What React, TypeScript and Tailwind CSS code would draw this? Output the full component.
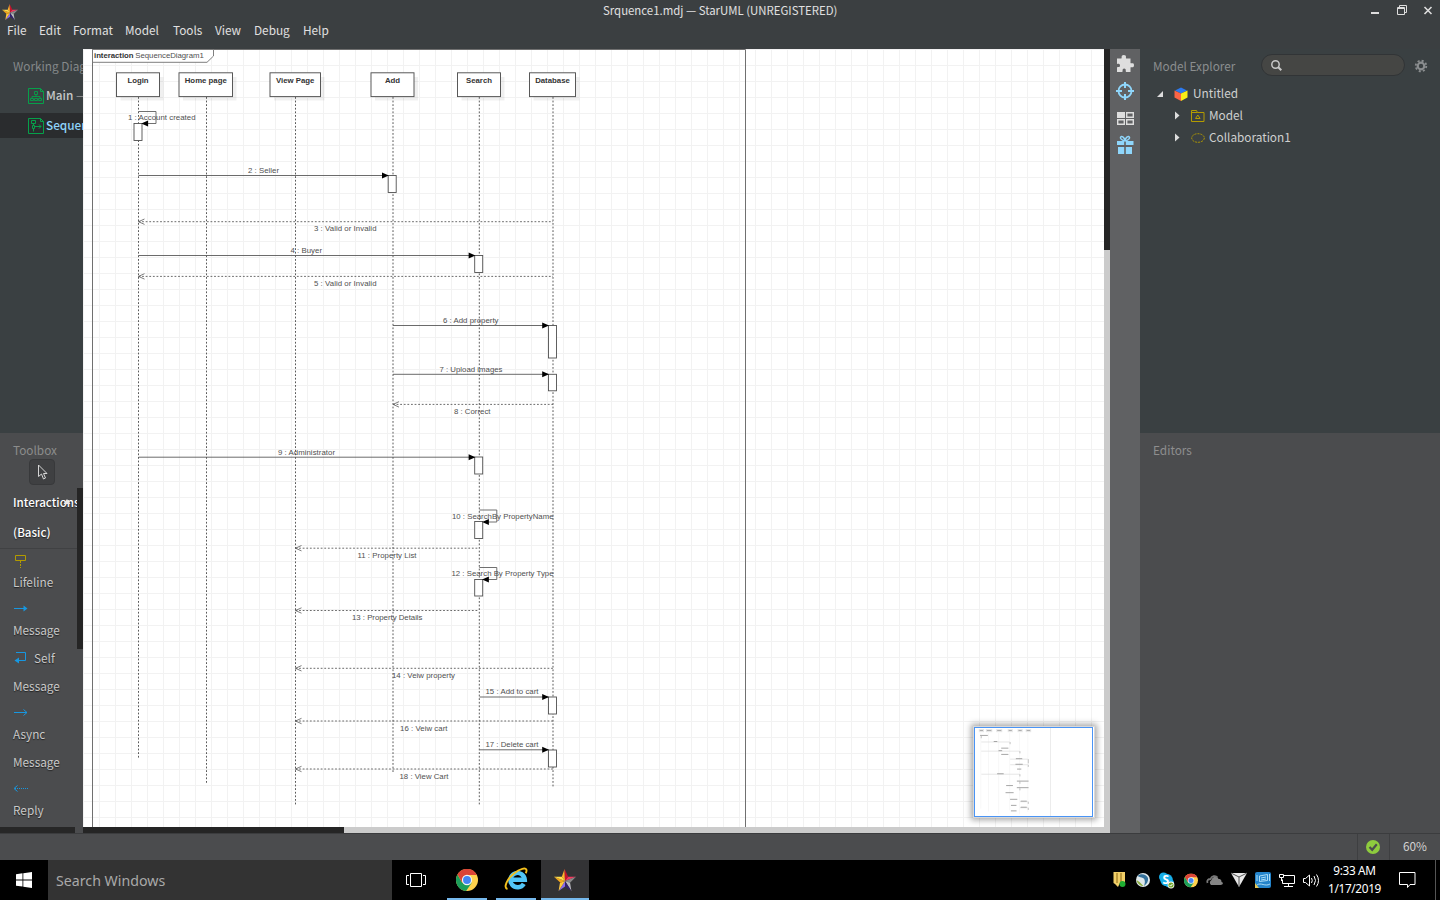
import React from "react";

const UI = "font-['Noto_Sans_CJK_SC',sans-serif]";
const INK = "#5a5a5a";

const heads: [string, number, number, number, number][] = [
  ["Login", 116.5, 43, 138.5, 758],
  ["Home page", 179, 53.5, 206.5, 783],
  ["View Page", 270, 50.5, 295.5, 806],
  ["Add", 371, 43, 393, 772],
  ["Search", 457.5, 43, 479.3, 806],
  ["Database", 529.5, 46, 553, 787],
];

const bars: [number, number, number][] = [
  [138, 123.5, 17], [392.2, 175.5, 17], [478.7, 255.5, 17], [552.5, 325.5, 32.5], [552.5, 374.3, 16.5],
  [478.7, 457, 17], [478.7, 521.5, 17], [478.7, 579.5, 16.5], [552.5, 697, 17], [552.5, 750, 17],
];

const calls: [number, number, number][] = [
  [138.5, 388, 175.5], [138.5, 474.6, 255.5], [393, 548.2, 325.5], [393, 548.2, 374.3],
  [138.5, 474.6, 457.2], [479.5, 548.2, 697], [479.5, 548.2, 749.8],
];

const replies: [number, number, number][] = [
  [138.5, 553, 221.7], [138.5, 553, 276.4], [393, 553, 404.4], [295.5, 479, 548.2],
  [295.5, 479, 610.5], [295.5, 553, 668.3], [295.5, 553, 721], [295.5, 553, 769],
];

const loops: [number, number][] = [[138.5, 111.5], [479.3, 510], [479.3, 567.5]];

const labels: [string, number, number, number][] = [
  ["1 : Account created", 128, 120.2, 67.5],
  ["2 : Seller", 248, 173.3, 31],
  ["3 : Valid or Invalid", 314, 231.3, 62.5],
  ["4 : Buyer", 290.5, 253.3, 31.5],
  ["5 : Valid or Invalid", 314, 286, 62.5],
  ["6 : Add property", 443, 323.3, 55.5],
  ["7 : Upload images", 439.5, 372.2, 63],
  ["8 : Correct", 454, 414.2, 36.5],
  ["9 : Administrator", 278, 455, 57],
  ["10 : SearchBy PropertyName", 452, 519.3, 101.5],
  ["11 : Property List", 357.5, 558.2, 59],
  ["12 : Search By Property Type", 451.5, 576.4, 102],
  ["13 : Property Details", 352, 620.3, 70.5],
  ["14 : Veiw property", 392, 678.2, 63],
  ["15 : Add to cart", 485.5, 694.2, 53],
  ["16 : Veiw cart", 400, 731.2, 47.5],
  ["17 : Delete cart", 485.5, 747.2, 53],
  ["18 : View Cart", 399.5, 779.2, 49],
];

function Diagram() {
  return (
    <svg width="1021" height="778" viewBox="83 49 1021 778" className="block" fontFamily="'Liberation Sans', sans-serif">
      <defs>
        <pattern id="grid" x="83" y="49" width="16" height="16" patternUnits="userSpaceOnUse">
          <path d="M0 .5H16M.5 0V16" stroke="#f2f2f2" />
        </pattern>
      </defs>
      <rect x="83" y="49" width="1021" height="778" fill="#fff" />
      <rect x="83" y="49" width="1021" height="778" fill="url(#grid)" />
      <path d="M745.5 827V49.5H92.5V827" fill="none" stroke="#707070" />
      <path d="M92.500 49.500H213.500V56L207 62.300H92.500Z" fill="#fff" stroke="#707070" strokeWidth=".9" />
      <text x="94" y="58.2" fontSize="7.8" fontWeight="bold" fill="#333" textLength="39.5">interaction</text>
      <text x="135.3" y="58.2" fontSize="7.8" fill="#505050" textLength="68.5">SequenceDiagram1</text>
      {heads.map(([name, x, w, cx, end]) => (
        <g key={name}>
          <rect x={x + 4} y="77" width={w} height="23.5" fill="#000" opacity=".06" />
          <rect x={x} y="72.8" width={w} height="23.8" fill="#fff" stroke="#505050" strokeWidth=".95" />
          <text x={x + w / 2} y="82.9" fontSize="7.8" fontWeight="bold" fill="#333" textAnchor="middle">{name}</text>
          <path d={`M${cx} 97V${end}`} stroke={INK} strokeDasharray="1.8 1.8" />
        </g>
      ))}
      {bars.map(([cx, y, h]) => (
        <rect key={`${cx}-${y}`} x={cx - 4} y={y} width="8" height={h} fill="#fff" stroke="#505050" strokeWidth=".9" />
      ))}
      {calls.map(([a, b, y]) => (
        <g key={y}>
          <path d={`M${a} ${y}H${b}`} stroke={INK} strokeWidth=".9" />
          <path d={`M${b + 0.8} ${y}l-6.8-3v6z`} fill="#000" />
        </g>
      ))}
      {replies.map(([a, b, y]) => (
        <g key={y} fill="none" stroke={INK} strokeWidth=".9">
          <path d={`M${a} ${y}H${b}`} strokeDasharray="1.8 1.8" />
          <path d={`M${a + 6} ${y - 2.7}L${a} ${y}L${a + 6} ${y + 2.7}`} strokeWidth=".8" />
        </g>
      ))}
      {loops.map(([x, y]) => (
        <g key={y}>
          <path d={`M${x} ${y}h17.5v12h-11`} fill="none" stroke="#606060" strokeWidth=".9" />
          <path d={`M${x + 2.8} ${y + 12}l6.8-3v6z`} fill="#000" />
        </g>
      ))}
      {labels.map(([t, x, y, w]) => (
        <text key={t} x={x} y={y} fontSize="7.8" fill="#505050" textLength={w}>{t}</text>
      ))}
    </svg>
  );
}

function MiniMap() {
  const sx = (x: number) => 975 + (x - 83) * 0.1135;
  const sy = (y: number) => 727.5 + (y - 49) * 0.1145;
  return (
    <div className="absolute left-[890px] top-[677px] h-[92px] w-[122px] border border-[#d8d8d8] bg-white shadow-[0_0_6px_2px_rgba(0,0,0,0.35)]">
      <svg width="120" height="90" viewBox="974 727 120 90" className="block">
        <rect x="974.500" y="727.500" width="118" height="89" fill="#fff" stroke="#4a94f5" />
        <path d="M1050.500 728V816" stroke="#ececec" />
        {heads.map(([n, x, w, cx, e]) => (
          <g key={n}>
            <rect x={sx(x)} y="729" width={w * 0.12} height="3.2" fill="#e8e8e8" />
            <path d={`M${sx(x) + 1} 730.500h${w * 0.12 - 2}`} stroke="#a0a0a0" strokeWidth=".8" />
            <path d={`M${sx(cx) - 0.5} 733V${sy(e)}`} stroke="#f2f2f2" strokeWidth=".6" />
          </g>
        ))}
        {calls.map(([a, b, y]) => <path key={y} d={`M${sx(a)} ${sy(y)}H${sx(b)}`} stroke="#dcdcdc" strokeWidth=".7" />)}
        {bars.map(([x, y, h]) => <path key={`${x}${y}`} d={`M${sx(x)} ${sy(y)}v${h * 0.13}`} stroke="#aaa" strokeWidth=".7" />)}
        {labels.map(([t, x, y, w]) => <path key={t} d={`M${sx(x)} ${sy(y - 2)}h${w * 0.115}`} stroke="#909090" strokeWidth=".8" />)}
      </svg>
    </div>
  );
}

function Star({ size }: { size: number }) {
  return (
    <svg width={size} height={size} viewBox="0 0 24 24" className="block shrink-0">
      <path d="M11.500 0 8.500 8.500 12 13Z" fill="#ffb52c" />
      <path d="M11.500 0 15.500 8.500 12 13Z" fill="#c4132d" />
      <path d="M15.500 8.500 24 8.500 12 13Z" fill="#f23a60" />
      <path d="M24 8.500 17.500 15 12 13Z" fill="#898989" />
      <path d="M17.500 15 19 24 12 13Z" fill="#b8b8bd" />
      <path d="M19 24 12 19 12 13Z" fill="#34206e" />
      <path d="M12 19 5 24 12 13Z" fill="#8a6be8" />
      <path d="M5 24 6.500 15 12 13Z" fill="#ffc93c" />
      <path d="M7 15 0 8.500 12 13Z" fill="#f4a51c" />
      <path d="M0 8.500 8.500 8.500 12 13Z" fill="#ffe04b" />
    </svg>
  );
}

function Chrome({ size }: { size: number }) {
  return (
    <svg width={size} height={size} viewBox="0 0 24 24" className="block">
      <circle cx="12" cy="12" r="12" fill="#ffd24d" />
      <path d="M1.600 6A12 12 0 0 0 11 24L17.200 15 12 12 6.800 15Z" fill="#1b9e5a" />
      <path d="M1.600 6A12 12 0 0 1 22.800 6.600H12L6.800 15Z" fill="#db4437" />
      <circle cx="12" cy="12" r="5.600" fill="#f4f4f4" />
      <circle cx="12" cy="12" r="4.300" fill="#4285f4" />
    </svg>
  );
}

const menus = [["File", "w-8"], ["Edit", "w-[34px]"], ["Format", "w-[52px]"], ["Model", "w-12"], ["Tools", "w-[42px]"], ["View", "w-[39px]"], ["Debug", "w-[49px]"], ["Help", "w-10"]];

function TitleBar() {
  return (
    <header className="h-[49px] shrink-0 bg-[#3b3f41] text-[#e0e0e0]">
      <div className="flex h-[21px] items-center">
        <div className="w-[83px] pl-[2px] pt-[3px]"><Star size={16} /></div>
        <div className="flex-1 pl-[520px] text-[11.4px] leading-[21px] whitespace-nowrap">Srquence1.mdj — StarUML (UNREGISTERED)</div>
        <svg width="80" height="21" viewBox="1360 0 80 21" fill="none" stroke="#ddd">
          <path d="M1371 13h8" strokeWidth="2" />
          <path d="M1397.500 7.500h7v7h-7zM1399.500 7V5.500h7v7H1405M1397 8.500h8" />
          <path d="M1424.500 7l7 7M1431.500 7l-7 7" strokeWidth="1.600" />
        </svg>
      </div>
      <nav className="flex h-[18px] items-center gap-0 pl-[7px] text-[11.8px] leading-[18px]">
        {menus.map(([m, w]) => <span key={m} className={w + " shrink-0"}>{m}</span>)}
      </nav>
    </header>
  );
}

function DiagramIcon({ seq }: { seq?: boolean }) {
  return (
    <svg width="16" height="16" viewBox="0 0 16 16" fill="none" stroke="#06a04a" className="shrink-0">
      <path d="M.500 .500H12.500L15.500 3.500V15.500H.500ZM12.500 .500v3h3" />
      {seq ? (
        <path d="M3.500 2.500h4v3h-4zM5.500 5.500v2M4.500 7.500h2v3h-2zM5.500 10.500v3M7 8.500h6M11 6.500l2 2-2 2" />
      ) : (
        <path d="M6.500 3.500h3v3h-3zM8 6.500v2.500M4 10.500V8.500h8v2M2.500 10.500h3v2h-3zM6.500 10.500h3v2h-3zM10.500 10.500h3v2h-3z" strokeWidth=".9" />
      )}
    </svg>
  );
}

function ToolIcon({ kind }: { kind: string }) {
  if (kind === "life")
    return <svg width="16" height="16" viewBox="0 0 16 16" fill="none" stroke="#b39b00"><path d="M2.500 2.500h10v5h-10z" /><path d="M7.500 8v7" strokeDasharray="2 1" /></svg>;
  return (
    <svg width="16" height="16" viewBox="0 0 16 16" fill="none" stroke="#1797e0">
      {kind === "msg" && <><path d="M1 8.500h10" /><path d="M10.500 5.500v6l4-3z" fill="#1797e0" stroke="none" /></>}
      {kind === "self" && <><path d="M3 2.500h9.500v8H5" /><path d="M6 7.500v6l-4.500-3z" fill="#1797e0" stroke="none" /></>}
      {kind === "async" && <path d="M1 8.500h13M10.500 5.500l3.500 3-3.500 3" />}
      {kind === "reply" && <><path d="M2 8.500h13" strokeDasharray="1 1" /><path d="M4.500 5.500L1 8.500l3.500 3" /></>}
    </svg>
  );
}

function LeftPanel() {
  return (
    <aside className="flex w-[83px] shrink-0 flex-col overflow-hidden whitespace-nowrap">
      <div className="h-[384px] bg-[#3a4042] text-[11.8px]">
        <div className="h-[31px] pl-[13px] pt-[7px] leading-5 text-[#85898a]">Working Diagrams</div>
        <div className="flex h-[33px] items-center gap-[2px] pb-[2px] pl-7 font-medium text-[#c6c8c8]"><DiagramIcon /><span className="-mt-[2px]">Main <span className="font-normal text-[#999]">— Model</span></span></div>
        <div className="flex h-[25px] items-center gap-[2px] bg-[#2a2c2e] pl-7 font-medium text-[#8fd4fb]"><DiagramIcon seq /><span className="-mt-[2px]">SequenceDiagram1</span></div>
      </div>
      <div className="flex h-[400px] flex-col bg-[#4b4c4e] text-[11.8px] text-[#c9c9c9]">
        <div className="h-[26px] pl-[13px] pt-[7px] leading-5 text-[#8c8c8c]">Toolbox</div>
        <div className="ml-[29px] flex h-[26px] w-[26px] shrink-0 items-center justify-center rounded border border-[#38393b] bg-[#3f4042] pl-[2px]">
          <svg width="12" height="17" viewBox="0 0 12 17" fill="#3f4042" stroke="#d5d5d5"><path d="M1.500 1v11.500l3-2.500 2 5 2-1-2-4.500h3.500z" /></svg>
        </div>
        <div className="flex flex-1 overflow-hidden">
          <div className="w-[77px] overflow-hidden [text-shadow:0_1px_1px_#222]">
            <div className="relative flex h-[64px] flex-col border-b border-[#404143] pl-[13px] pt-[2px] text-[11.6px] font-medium leading-[30px] text-white">
              <span>Interactions</span><span>(Basic)</span>
              <svg width="8" height="6" className="absolute left-[63px] top-[14px]" fill="#e8e8e8"><path d="M4 0 7.500 5H.500z" /></svg>
            </div>
            <div className="flex flex-col pl-[13px] leading-7">
              <div className="h-[19px] pt-1"><ToolIcon kind="life" /></div>
              <div className="h-7">Lifeline</div>
              <div className="h-5 pt-[4px]"><ToolIcon kind="msg" /></div>
              <div className="h-7">Message</div>
              <div className="flex h-7 items-center gap-[5px]"><ToolIcon kind="self" />Self</div>
              <div className="h-7">Message</div>
              <div className="h-5 pt-[4px]"><ToolIcon kind="async" /></div>
              <div className="h-7">Async</div>
              <div className="h-7">Message</div>
              <div className="h-5 pt-[4px]"><ToolIcon kind="reply" /></div>
              <div className="h-7">Reply</div>
            </div>
          </div>
          <div className="mt-[3px] h-[161px] w-[6px] bg-[#252525]" />
        </div>
        <div className="h-[6px] w-[75px] shrink-0 bg-[#272727]" />
      </div>
    </aside>
  );
}

function RightPanel() {
  return (
    <aside className="flex w-[300px] shrink-0 flex-col text-[11.8px] text-[#cfd0d0]">
      <div className="h-[384px] bg-[#3a4042]">
        <div className="flex h-[34px] items-center pl-[13px] text-[#8b8e8f]">
          <span className="w-[108px]">Model Explorer</span>
          <div className="-mt-[2px] flex h-[22px] w-[144px] items-center rounded-full border border-[#313436] bg-[#454644] pl-2">
            <svg width="13" height="13" viewBox="0 0 13 13" fill="none" stroke="#c8c8c8" strokeWidth="1.500"><circle cx="5.500" cy="5.500" r="3.700" /><path d="M8.300 8.300l3 3" strokeWidth="2" /></svg>
          </div>
          <svg width="14" height="14" viewBox="0 0 14 14" className="ml-[9px]" fill="none" stroke="#8a8d8f"><circle cx="7" cy="7" r="3.300" strokeWidth="2.200" /><circle cx="7" cy="7" r="5.300" strokeWidth="1.800" strokeDasharray="2.080 2.080" /></svg>
        </div>
        <div className="flex h-[22px] items-center pb-[1px] pl-[16px]">
          <svg width="8" height="8" fill="#ddd"><path d="M7 1v6H1z" /></svg>
          <svg width="14" height="14" viewBox="0 0 14 14" className="ml-[10px] mr-[5px]"><path d="M7 .500l6 3L7 6.500 1 3.500z" fill="#2c79ee" /><path d="M.500 3.500L7 6.500V14L.500 10.500z" fill="#fb6446" /><path d="M13.500 3.500L7 6.500V14l6.500-3.500z" fill="#f8ec16" /></svg>
          <span className="-mt-[2px]">Untitled</span>
        </div>
        <div className="flex h-[22px] items-center pb-[1px] pl-[34px]">
          <svg width="7" height="9" fill="#ddd"><path d="M1 .500v8l4.500-4z" /></svg>
          <svg width="14" height="12" viewBox="0 0 14 12" className="ml-[10px] mr-[4px]" fill="none" stroke="#b39b00"><path d="M.500 11.500V.500h5l1 2h6.500v9zM.500 2.500h6M4.500 8.500l2.300-3.500 2.300 3.500z" /></svg>
          <span className="-mt-[2px]">Model</span>
        </div>
        <div className="flex h-[22px] items-center pb-[1px] pl-[34px]">
          <svg width="7" height="9" fill="#ddd"><path d="M1 .500v8l4.500-4z" /></svg>
          <svg width="14" height="10" viewBox="0 0 14 10" className="ml-[10px] mr-[4px]" fill="none" stroke="#b39b00"><ellipse cx="7" cy="5" rx="6.300" ry="4.300" strokeDasharray="2 1" /></svg>
          <span className="-mt-[2px]">Collaboration1</span>
        </div>
      </div>
      <div className="h-[400px] bg-[#4b4c4e] pl-[13px] pt-[7px] leading-5 text-[#8e8e8e]">Editors</div>
    </aside>
  );
}

function ToolStrip() {
  return (
    <div className="w-[30px] shrink-0 bg-[#606163]">
      <svg width="30" height="110" viewBox="1110 49 30 110" className="block">
        <path d="M1117 58.500h4.300c1-.5-.8-3.500 2.500-3.500 3.500 0 1.500 3 2.500 3.500h4.200v4.500c.6 1 3.500-1 3.500 2.200s-3 1.300-3.500 2.300v4.500h-4.300c-1-.5.500-3.500-2-3.500s-1 3-2 3.500H1117v-4.500c.6-1 3 .5 3-2s-2.400-1-3-2z" fill="#dedede" />
        <g fill="none" stroke="#8fd6fb"><circle cx="1125" cy="91" r="6.500" strokeWidth="1.800" /><path d="M1125 82v6M1125 94v6M1116 91h6M1128 91h6" strokeWidth="2" /></g>
        <path d="M1117 112h8v6h-8z" fill="#dedede" />
        <path d="M1126.700 112.700h6.600v4.600h-6.600zM1117.700 119.700h6.600v4.600h-6.600zM1126.700 119.700h6.600v4.600h-6.600z" fill="none" stroke="#dedede" strokeWidth="1.400" />
        <g fill="#8fd6fb"><path d="M1117 141h7.200v4H1117zM1125.800 141h7.700v4h-7.700zM1118 147h6.200v7h-6.200zM1125.800 147h6.200v7h-6.200z" /></g>
        <path d="M1125 141c-3-1-5-2-4.500-3.800.8-1.800 4-.5 4.500 3.800.5-4.300 3.700-5.600 4.500-3.800.5 1.800-1.500 2.800-4.500 3.800" fill="none" stroke="#8fd6fb" strokeWidth="1.500" />
      </svg>
    </div>
  );
}

function TaskBar() {
  return (
    <footer className="flex h-10 shrink-0 bg-black font-['Noto_Sans',sans-serif] text-white">
      <div className="flex w-12 items-center justify-center"><svg width="16" height="16" viewBox="0 0 16 16" fill="#fff"><path d="M0 2.200l6.500-.9v6.200H0zM7.300 1.200L16 0v7.500H7.300zM0 8.400h6.500v6.200L0 13.700zM7.300 8.400H16V16l-8.700-1.200z" /></svg></div>
      <div className="flex w-[344px] items-center bg-[#333] pl-2 pt-[2px] text-[14.2px] text-[#a9a9a9]">Search Windows</div>
      <div className="flex w-12 items-center justify-center"><svg width="20" height="14" viewBox="0 0 20 14" fill="none" stroke="#fff"><path d="M4.500 .500h11v13h-11zM3 2.500H.500v9H3M17 2.500h2.500v9H17" /></svg></div>
      <div className="ml-[7px] flex w-10 items-center justify-center border-b-2 border-[#76b9ed] pt-[2px]"><Chrome size={22} /></div>
      <div className="ml-[9px] flex w-10 items-center justify-center border-b-2 border-[#76b9ed]">
        <svg width="24" height="24" viewBox="0 0 24 24" fill="none"><path d="M19.800 16.800A7.200 7.200 0 1 1 20.800 12.700H7" stroke="#51c5f6" strokeWidth="4.400" /><path d="M3.500 22C-1 21 3 12 10 6.500 16 1.500 22 .200 22.500 3c.2 1.200-.2 2.200-.8 3.200" stroke="#f4c01c" strokeWidth="1.900" /></svg>
      </div>
      <div className="ml-[5px] flex w-12 items-center justify-center border-b-2 border-[#76b9ed] bg-[#333335] pt-[2px]"><Star size={22} /></div>
      <div className="flex-1" />
      <svg width="214" height="40" viewBox="1110 860 214 40" className="block -translate-x-px">
        <path d="M1113.500 872h11.500v12l-3 2-2-3-2 4-3-3-1.500-1z" fill="#f1cf68" /><path d="M1117 873v10M1121 873v10" stroke="#8a6710" /><circle cx="1122.500" cy="884" r="3" fill="#1fae32" />
        <g transform="translate(-1 0)">
          <circle cx="1144" cy="880" r="7" fill="#dfe8eb" /><path d="M1138.500 876c3-3 9-2 10.500 2 .5 3-1 6-4 8 1.500-4 1-7-1-8-2-1-3-.5-5.500-2z" fill="#33709a" /><path d="M1137.500 880c1 4 4 6 7 6l-4-4z" fill="#8dae3f" />
          <circle cx="1164.500" cy="877" r="4.500" fill="#16aee9" /><circle cx="1170.500" cy="883" r="4.500" fill="#16aee9" /><circle cx="1167.500" cy="880" r="6.200" fill="#16aee9" /><text x="1163.500" y="884.300" fontSize="12" fontWeight="bold" fill="#fff">S</text><circle cx="1172" cy="885" r="3.400" fill="#fff" /><circle cx="1172" cy="885" r="2.600" fill="#72a52c" /><path d="M1170.600 885l1.100 1.100 1.800-2.200" stroke="#fff" strokeWidth="1" fill="none" />
          <g transform="translate(1185 873.500)"><Chrome size={14} /></g>
          <path d="M1212 885a3 3 0 0 1 .5-5c1-4 6-4 7-1 3 0 3 2 3 3 2 0 2 3-1 3z" fill="#858585" /><path d="M1208.500 883c-1-3 1-4 3-4 1-3 5-4 7-1.500" fill="none" stroke="#777" strokeWidth="1.800" />
          <path d="M1232 873h16l-8 14z" fill="#e8e8e8" /><path d="M1232 873l8 4 8-4M1240 877v10" fill="none" stroke="#555" />
          <rect x="1256" y="872" width="16" height="16" rx="2" fill="#2484cb" /><path d="M1260.500 876l8-1.500v6l-8 1zM1262 878l5-1M1262 880l5-1M1258 885c4-3 8 2 13-1M1258 875v6M1270.500 874v7" fill="none" stroke="#b9e5fa" strokeWidth=".9" /><path d="M1256 883l4 5h-4z" fill="#e7c854" />
          <g fill="none" stroke="#fff"><path d="M1285 875.500h10.500v8h-12v-4M1289.500 884v2.500M1285 886.500h9M1280.500 874.500h4v3h-4zM1282.500 878v3" /><path d="M1304.500 878.500h2l4-3.500v11l-4-3.500h-2zM1312.500 878q1.500 2.500 0 5M1315 876q3 4.500 0 9M1317.500 874.500q4 6 0 12" /></g>
        </g>
      </svg>
      <div className="flex w-[62px] flex-col items-center pr-[3px] pt-px text-[11.8px] leading-[18px] tracking-[-0.35px]"><span>9:33 AM</span><span>1/17/2019</span></div>
      <div className="flex w-[49px] justify-center border-r border-[#555] pr-[8px] pt-3"><svg width="17" height="17" viewBox="0 0 17 17" fill="none" stroke="#fff"><path d="M.500 .500h15.500v12h-5l-2.500 3v-3h-8z" /></svg></div>
      <div className="w-1" />
    </footer>
  );
}

export default function App() {
  return (
    <div className={UI + " flex h-[900px] w-[1440px] flex-col overflow-hidden"}>
      <TitleBar />
      <main className="flex h-[784px] shrink-0">
        <LeftPanel />
        <section className="relative w-[1021px] shrink-0 overflow-hidden">
          <Diagram />
          <div className="flex h-[6px] bg-[#cbcbcb]"><div className="w-[261px] bg-[#252525]" /></div>
          <MiniMap />
        </section>
        <div className="w-[6px] shrink-0 bg-[#cbcbcb]"><div className="h-[201px] bg-[#252525]" /></div>
        <ToolStrip />
        <RightPanel />
      </main>
      <div className="flex h-[27px] shrink-0 justify-end border-t border-[#3b3c3e] bg-[#4b4c4e] text-[11.8px] text-[#d2d2d2]">
        <div className="flex w-[33px] items-center justify-center border-x border-[#3e3f41] pr-px"><svg width="14" height="14" viewBox="0 0 14 14"><circle cx="7" cy="7" r="7" fill="#8ecb3e" /><path d="M3.500 7l2.700 2.800 4.600-5.500" fill="none" stroke="#4b4c4e" strokeWidth="2.200" /></svg></div>
        <div className="flex w-[50px] items-center justify-center pb-[2px]">60%</div>
      </div>
      <TaskBar />
    </div>
  );
}
